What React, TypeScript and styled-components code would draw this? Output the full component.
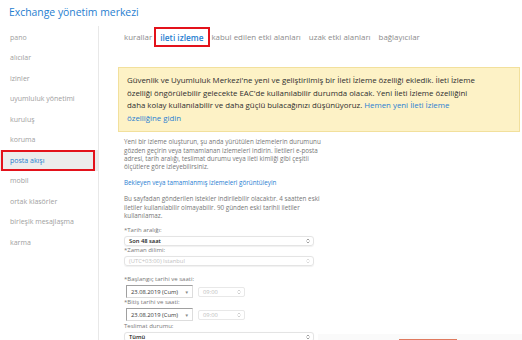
import styled, { createGlobalStyle } from 'styled-components';

const GlobalStyle = createGlobalStyle`
  html, body {
    margin: 0;
    padding: 0;
    background: #fff;
  }
  body {
    font-family: 'Open Sans', 'Noto Sans', sans-serif;
  }
`;

const navItems = [
  'pano',
  'alıcılar',
  'izinler',
  'uyumluluk yönetimi',
  'kuruluş',
  'koruma',
  'posta akışı',
  'mobil',
  'ortak klasörler',
  'birleşik mesajlaşma',
  'karma',
];

const tabs = ['kurallar', 'ileti izleme', 'kabul edilen etki alanları', 'uzak etki alanları', 'bağlayıcılar'];

const Page = styled.div`
  position: relative;
  width: 522px;
  height: 340px;
  overflow: hidden;
  display: flex;
  flex-direction: column;
`;

const Title = styled.h1`
  margin: 0;
  height: 26px;
  box-sizing: border-box;
  padding: 4px 0 0 9px;
  font-size: 10.4px;
  line-height: 16px;
  font-weight: 400;
  color: #1f7ed0;
`;

const Body = styled.div`
  flex: 1;
  display: grid;
  grid-template-columns: 99px 1fr;
  min-height: 0;
`;

const Sidebar = styled.nav`
  border-right: 1px solid #e8e8e8;
  padding-top: 1px;
`;

const NavItem = styled.div<{ $active?: boolean }>`
  position: relative;
  height: 20.5px;
  display: flex;
  align-items: center;
  padding-left: 10px;
  font-size: 7px;
  color: ${(p) => (p.$active ? '#1f7ed0' : '#a0a0a0')};
  background: ${(p) => (p.$active ? '#ececec' : 'transparent')};

  ${(p) =>
    p.$active &&
    `
    &::after {
      content: '';
      position: absolute;
      left: 1px;
      top: 0;
      bottom: 0;
      width: 94px;
      border: 2px solid #e3121b;
      box-sizing: border-box;
    }
  `}
`;

const Main = styled.main`
  padding: 0 2px 0 19px;
  display: flex;
  flex-direction: column;
  min-width: 0;
`;

const TabRow = styled.div`
  display: flex;
  align-items: center;
  gap: 8px;
  height: 22px;
  padding-left: 6px;
`;

const Tab = styled.span<{ $active?: boolean }>`
  position: relative;
  white-space: nowrap;
  font-size: ${(p) => (p.$active ? '8.3px' : '7.9px')};
  font-weight: ${(p) => (p.$active ? 600 : 400)};
  color: ${(p) => (p.$active ? '#1f7ed0' : '#8c8c8c')};

  ${(p) =>
    p.$active &&
    `
    &::after {
      content: '';
      position: absolute;
      left: -6px;
      right: -7px;
      top: -5px;
      bottom: -4px;
      border: 2.5px solid #e3121b;
    }
  `}
`;

const Notice = styled.div`
  margin-top: 19px;
  padding: 6px 8px 7px;
  background: #fdf2c6;
  border: 1px solid #f2e09c;
  font-size: 7.85px;
  line-height: 12.6px;
  color: #2e2e2e;
  white-space: nowrap;
`;

const NoticeLink = styled.span`
  color: #2a80d2;
`;

const Content = styled.section`
  padding: 6px 0 0 6px;
  display: flex;
  flex-direction: column;
`;

const Para = styled.p<{ $gap?: number }>`
  margin: ${(p) => p.$gap ?? 0}px 0 0;
  font-size: 6.3px;
  line-height: 8.2px;
  color: #777;
  white-space: nowrap;
`;

const TextLink = styled.a`
  margin-top: 8px;
  font-size: 6.3px;
  line-height: 8.2px;
  color: #2a80d2;
  text-decoration: none;
`;

const Label = styled.label<{ $gap?: number }>`
  display: block;
  margin-top: ${(p) => p.$gap ?? 0}px;
  font-size: 6px;
  line-height: 8px;
  color: #777;
`;

const Select = styled.div<{ $disabled?: boolean; $gap?: number }>`
  margin-top: ${(p) => p.$gap ?? 2}px;
  width: 190px;
  height: 10px;
  box-sizing: border-box;
  display: flex;
  align-items: center;
  justify-content: space-between;
  padding: 0 3px 0 4px;
  border: 1px solid #e4e4e4;
  border-radius: 3px;
  box-shadow: 0 0.5px 1px rgba(0, 0, 0, 0.06);
  font-size: 5.8px;
  font-weight: ${(p) => (p.$disabled ? 400 : 600)};
  color: ${(p) => (p.$disabled ? '#c2c2c2' : '#222')};
`;

const DateRow = styled.div`
  display: flex;
  align-items: center;
  gap: 5px;
  margin: 2px 0 0 2px;
`;

const DateBox = styled.div`
  width: 67px;
  height: 13px;
  box-sizing: border-box;
  display: flex;
  align-items: center;
  justify-content: space-between;
  padding: 0 3px 0 4px;
  border: 1px solid #ddd;
  border-top-color: #a0a0a0;
  border-left-color: #a0a0a0;
  font-size: 5.8px;
  color: #333;
`;

const Caret = styled.span`
  font-size: 4.5px;
  color: #888;
`;

const TimeBox = styled.div`
  width: 47px;
  height: 10px;
  box-sizing: border-box;
  display: flex;
  align-items: center;
  justify-content: space-between;
  padding: 0 3px 0 4px;
  border: 1px solid #e8e8e8;
  border-radius: 2px;
  font-size: 5.8px;
  color: #c0c0c0;
`;

const BottomBar = styled.div`
  position: absolute;
  left: 318px;
  right: 0;
  bottom: 0;
  height: 6px;
  background: #fafafa;
  display: flex;
  align-items: flex-end;
  padding-left: 81px;
`;

const Progress = styled.div`
  width: 58px;
  height: 1.5px;
  background: #e07a5f;
`;

function UpDown({ color = '#777' }: { color?: string }) {
  return (
    <svg width="4" height="6" viewBox="0 0 4 6" fill="none">
      <path d="M0.6 2.4 L2 1 L3.4 2.4 M0.6 3.6 L2 5 L3.4 3.6" stroke={color} strokeWidth="0.7" />
    </svg>
  );
}

export default function App() {
  return (
    <>
      <GlobalStyle />
      <Page>
        <Title>Exchange yönetim merkezi</Title>
        <Body>
          <Sidebar>
            {navItems.map((item) => (
              <NavItem key={item} $active={item === 'posta akışı'}>
                {item}
              </NavItem>
            ))}
          </Sidebar>
          <Main>
            <TabRow>
              {tabs.map((t) => (
                <Tab key={t} $active={t === 'ileti izleme'}>
                  {t}
                </Tab>
              ))}
            </TabRow>
            <Notice>
              Güvenlik ve Uyumluluk Merkezi'ne yeni ve geliştirilmiş bir İleti İzleme özelliği ekledik. İleti İzleme
              <br />
              özelliği öngörülebilir gelecekte EAC'de kullanılabilir durumda olacak. Yeni İleti İzleme özelliğini
              <br />
              daha kolay kullanılabilir ve daha güçlü bulacağınızı düşünüyoruz. <NoticeLink>Hemen yeni İleti İzleme</NoticeLink>
              <br />
              <NoticeLink>özelliğine gidin</NoticeLink>
            </Notice>
            <Content>
              <Para>
                Yeni bir izleme oluşturun, şu anda yürütülen izlemelerin durumunu
                <br />
                gözden geçirin veya tamamlanan izlemeleri indirin. İletileri e-posta
                <br />
                adresi, tarih aralığı, teslimat durumu veya ileti kimliği gibi çeşitli
                <br />
                ölçütlere göre izleyebilirsiniz.
              </Para>
              <TextLink href="#">Bekleyen veya tamamlanmış izlemeleri görüntüleyin</TextLink>
              <Para $gap={8}>
                Bu sayfadan gönderilen istekler indirilebilir olacaktır. 4 saatten eski
                <br />
                iletiler kullanılabilir olmayabilir. 90 günden eski tarihli iletiler
                <br />
                kullanılamaz.
              </Para>
              <Label $gap={6}>*Tarih aralığı:</Label>
              <Select>
                <span>Son 48 saat</span>
                <UpDown />
              </Select>
              <Label>*Zaman dilimi:</Label>
              <Select $disabled $gap={2}>
                <span>(UTC+03:00) Istanbul</span>
                <UpDown color="#ccc" />
              </Select>
              <Label $gap={9}>*Başlangıç tarihi ve saati:</Label>
              <DateRow>
                <DateBox>
                  <span>23.08.2019 (Cum)</span>
                  <Caret>▼</Caret>
                </DateBox>
                <TimeBox>
                  <span>09:00</span>
                  <UpDown color="#bbb" />
                </TimeBox>
              </DateRow>
              <Label>*Bitiş tarihi ve saati:</Label>
              <DateRow>
                <DateBox>
                  <span>23.08.2019 (Cum)</span>
                  <Caret>▼</Caret>
                </DateBox>
                <TimeBox>
                  <span>09:00</span>
                  <UpDown color="#bbb" />
                </TimeBox>
              </DateRow>
              <Label $gap={1}>Teslimat durumu:</Label>
              <Select>
                <span>Tümü</span>
                <UpDown />
              </Select>
            </Content>
          </Main>
        </Body>
        <BottomBar>
          <Progress />
        </BottomBar>
      </Page>
    </>
  );
}
